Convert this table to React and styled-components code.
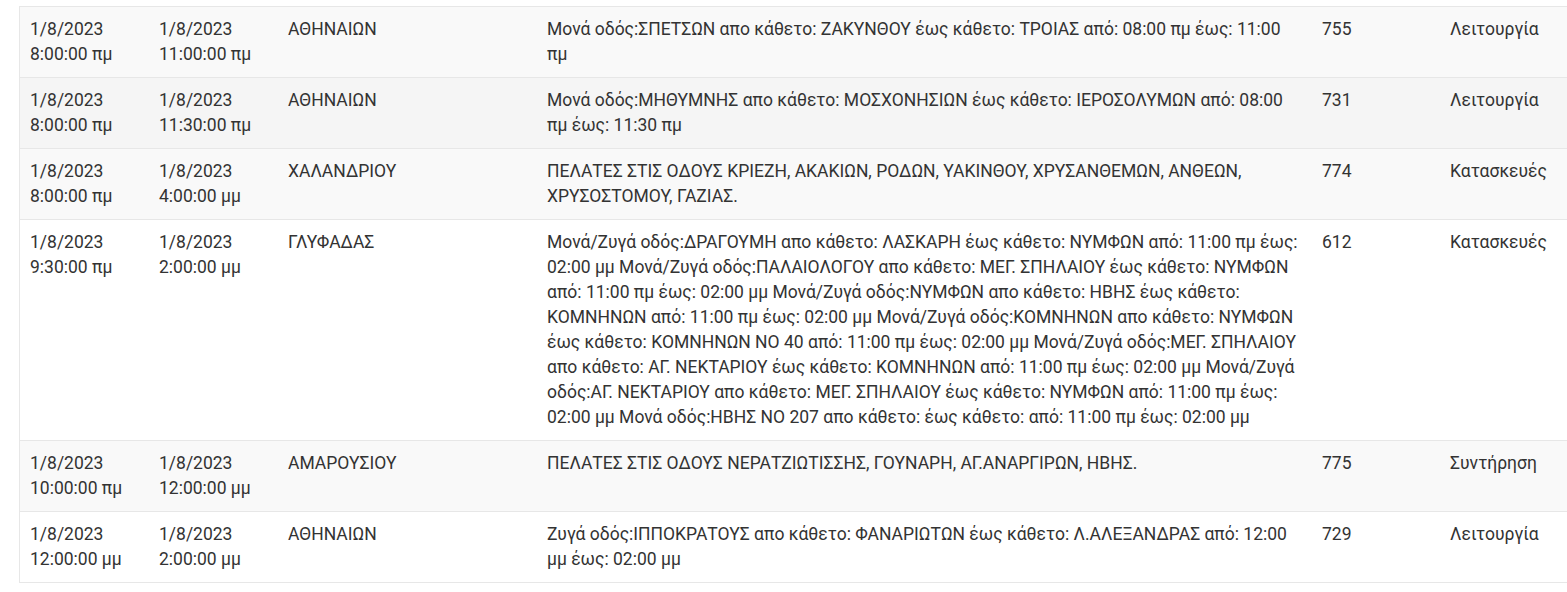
import React from "react";
import styled, { createGlobalStyle } from "styled-components";

const Global = createGlobalStyle`
  html, body { margin: 0; padding: 0; background: #fff; }
  body { font-family: Roboto, "Noto Sans", sans-serif; color: #333; overflow: hidden; }
`;

const Page = styled.div`
  padding: 6px 0 0 19px;
`;

const Table = styled.table`
  width: 1560px;
  border-collapse: separate;
  border-spacing: 0;
  table-layout: fixed;
  border-left: 1px solid #e7e7e7;
  border-bottom: 1px solid #e7e7e7;
  font-size: 17.5px;
  line-height: 25px;
`;

const Col = styled.col`
  width: ${(p) => p.$w}px;
`;

const Row = styled.tr`
  background: ${(p) => (p.$hover ? "#f5f5f5" : p.$odd ? "#f9f9f9" : "#fff")};
`;

const Cell = styled.td`
  padding: 10px;
  vertical-align: top;
  border-top: 1px solid #e7e7e7;
  text-align: left;
  font-weight: 400;
`;

const rows = [
  ["1/8/2023 8:00:00 πμ", "1/8/2023 11:00:00 πμ", "ΑΘΗΝΑΙΩΝ", "Μονά οδός:ΣΠΕΤΣΩΝ απο κάθετο: ΖΑΚΥΝΘΟΥ έως κάθετο: ΤΡΟΙΑΣ από: 08:00 πμ έως: 11:00 πμ", "755", "Λειτουργία"],
  ["1/8/2023 8:00:00 πμ", "1/8/2023 11:30:00 πμ", "ΑΘΗΝΑΙΩΝ", "Μονά οδός:ΜΗΘΥΜΝΗΣ απο κάθετο: ΜΟΣΧΟΝΗΣΙΩΝ έως κάθετο: ΙΕΡΟΣΟΛΥΜΩΝ από: 08:00 πμ έως: 11:30 πμ", "731", "Λειτουργία"],
  ["1/8/2023 8:00:00 πμ", "1/8/2023 4:00:00 μμ", "ΧΑΛΑΝΔΡΙΟΥ", "ΠΕΛΑΤΕΣ ΣΤΙΣ ΟΔΟΥΣ ΚΡΙΕΖΗ, ΑΚΑΚΙΩΝ, ΡΟΔΩΝ, ΥΑΚΙΝΘΟΥ, ΧΡΥΣΑΝΘΕΜΩΝ, ΑΝΘΕΩΝ, ΧΡΥΣΟΣΤΟΜΟΥ, ΓΑΖΙΑΣ.", "774", "Κατασκευές"],
  ["1/8/2023 9:30:00 πμ", "1/8/2023 2:00:00 μμ", "ΓΛΥΦΑΔΑΣ", "Μονά/Ζυγά οδός:ΔΡΑΓΟΥΜΗ απο κάθετο: ΛΑΣΚΑΡΗ έως κάθετο: ΝΥΜΦΩΝ από: 11:00 πμ έως: 02:00 μμ Μονά/Ζυγά οδός:ΠΑΛΑΙΟΛΟΓΟΥ απο κάθετο: ΜΕΓ. ΣΠΗΛΑΙΟΥ έως κάθετο: ΝΥΜΦΩΝ από: 11:00 πμ έως: 02:00 μμ Μονά/Ζυγά οδός:ΝΥΜΦΩΝ απο κάθετο: ΗΒΗΣ έως κάθετο: ΚΟΜΝΗΝΩΝ από: 11:00 πμ έως: 02:00 μμ Μονά/Ζυγά οδός:ΚΟΜΝΗΝΩΝ απο κάθετο: ΝΥΜΦΩΝ έως κάθετο: ΚΟΜΝΗΝΩΝ ΝΟ 40 από: 11:00 πμ έως: 02:00 μμ Μονά/Ζυγά οδός:ΜΕΓ. ΣΠΗΛΑΙΟΥ απο κάθετο: ΑΓ. ΝΕΚΤΑΡΙΟΥ έως κάθετο: ΚΟΜΝΗΝΩΝ από: 11:00 πμ έως: 02:00 μμ Μονά/Ζυγά οδός:ΑΓ. ΝΕΚΤΑΡΙΟΥ απο κάθετο: ΜΕΓ. ΣΠΗΛΑΙΟΥ έως κάθετο: ΝΥΜΦΩΝ από: 11:00 πμ έως: 02:00 μμ Μονά οδός:ΗΒΗΣ ΝΟ 207 απο κάθετο: έως κάθετο: από: 11:00 πμ έως: 02:00 μμ", "612", "Κατασκευές"],
  ["1/8/2023 10:00:00 πμ", "1/8/2023 12:00:00 μμ", "ΑΜΑΡΟΥΣΙΟΥ", "ΠΕΛΑΤΕΣ ΣΤΙΣ ΟΔΟΥΣ ΝΕΡΑΤΖΙΩΤΙΣΣΗΣ, ΓΟΥΝΑΡΗ, ΑΓ.ΑΝΑΡΓΙΡΩΝ, ΗΒΗΣ.", "775", "Συντήρηση"],
  ["1/8/2023 12:00:00 μμ", "1/8/2023 2:00:00 μμ", "ΑΘΗΝΑΙΩΝ", "Ζυγά οδός:ΙΠΠΟΚΡΑΤΟΥΣ απο κάθετο: ΦΑΝΑΡΙΩΤΩΝ έως κάθετο: Λ.ΑΛΕΞΑΝΔΡΑΣ από: 12:00 μμ έως: 02:00 μμ", "729", "Λειτουργία"],
];

const widths = [129, 129, 259, 775, 128, 139];

export default function App() {
  return (
    <>
      <Global />
      <Page>
        <Table>
          <colgroup>
            {widths.map((w, i) => (
              <Col key={i} $w={w} />
            ))}
          </colgroup>
          <tbody>
            {rows.map((r, i) => (
              <Row key={i} $odd={i % 2 === 0} $hover={i === 1}>
                {r.map((c, j) => (
                  <Cell key={j}>{c}</Cell>
                ))}
              </Row>
            ))}
          </tbody>
        </Table>
      </Page>
    </>
  );
}
